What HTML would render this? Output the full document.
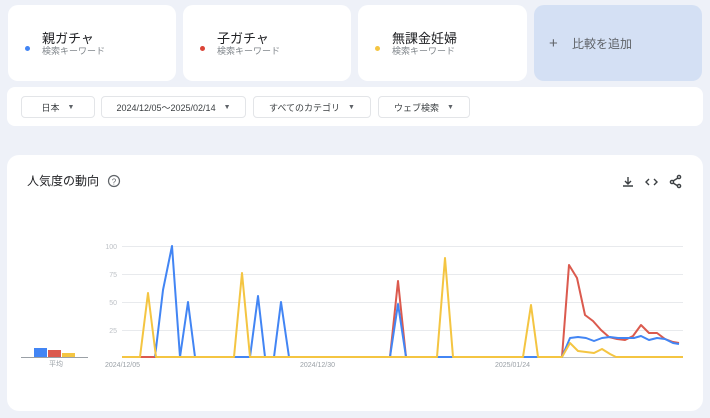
<!DOCTYPE html>
<html><head><meta charset="utf-8"><style>
*{margin:0;padding:0;box-sizing:border-box}
body{width:710px;height:418px;background:#eef1f8;font-family:"Liberation Sans","Noto Sans CJK JP",sans-serif;position:relative;overflow:hidden}
.card{position:absolute;top:5px;height:76px;background:#fff;border-radius:10px}
.dot{position:absolute;left:17px;top:41px;width:5px;height:5px;border-radius:50%}
.t{position:absolute;left:34px;top:27px;font-size:13px;line-height:14px;color:#202124}
.s{position:absolute;left:34px;top:41px;font-size:9px;line-height:10px;color:#80868b}
.bar{position:absolute;left:7px;top:87px;width:696px;height:39px;background:#fff;border-radius:8px}
.btn{position:absolute;top:96px;height:22px;border:1px solid #e3e5e8;border-radius:4px;font-size:9px;color:#3c4043;display:flex;align-items:center;justify-content:center}
.btn i{font-style:normal;font-size:7px;margin-left:8px;color:#5f6368}
.chart{position:absolute;left:7px;top:155px;width:696px;height:256px;background:#fff;border-radius:12px}
</style></head><body>
<div class="card" style="left:8px;width:168px"><div class="dot" style="background:#4285f4"></div><div class="t">親ガチャ</div><div class="s">検索キーワード</div></div>
<div class="card" style="left:183px;width:168px"><div class="dot" style="background:#db4437"></div><div class="t">子ガチャ</div><div class="s">検索キーワード</div></div>
<div class="card" style="left:358px;width:169px"><div class="dot" style="background:#f4c542"></div><div class="t">無課金妊婦</div><div class="s">検索キーワード</div></div>
<div class="card" style="left:534px;width:168px;background:#d4e0f4"><div style="position:absolute;left:15px;top:31px;font-size:15px;line-height:16px;color:#5f6368">+</div><div style="position:absolute;left:38px;top:33px;font-size:12px;line-height:13px;color:#5f6368">比較を追加</div></div>
<div class="bar"></div>
<div class="btn" style="left:21px;width:74px">日本<i>▼</i></div>
<div class="btn" style="left:101px;width:145px">2024/12/05〜2025/02/14<i>▼</i></div>
<div class="btn" style="left:253px;width:118px">すべてのカテゴリ<i>▼</i></div>
<div class="btn" style="left:378px;width:92px">ウェブ検索<i>▼</i></div>
<div class="chart"></div>
<div style="position:absolute;left:27px;top:174px;font-size:12px;line-height:14px;color:#202124">人気度の動向</div>
<svg width="710" height="418" style="position:absolute;left:0;top:0">
<circle cx="114" cy="181" r="5.5" fill="none" stroke="#5f6368" stroke-width="1.2"/>
<text x="114" y="184.5" font-size="8" text-anchor="middle" fill="#5f6368" font-family="Liberation Sans">?</text>
<g stroke="#3c4043" stroke-width="1.4" fill="none">
<path d="M628 177v7M625 181l3 3 3-3M623 186h10"/>
<path d="M649 179l-3 3 3 3M654 179l3 3-3 3"/>
<circle cx="679" cy="177" r="1.6"/><circle cx="672" cy="182" r="1.6"/><circle cx="679" cy="186" r="1.6"/><path d="M673 181l5-3M673 183l5 3"/>
</g>
<g stroke="#e8eaed" stroke-width="1"><path d="M122 246.5H683M122 274.5H683M122 302.5H683M122 330.5H683"/></g>
<path d="M122 357.5H683" stroke="#bdc1c6"/>
<g font-size="7" fill="#bdc1c6" font-family="Liberation Sans" text-anchor="end"><text x="117" y="249">100</text><text x="117" y="277">75</text><text x="117" y="305">50</text><text x="117" y="333">25</text></g>
<g font-size="7" fill="#9aa0a6" font-family="Liberation Sans"><text x="105" y="367">2024/12/05</text><text x="300" y="367">2024/12/30</text><text x="495" y="367">2025/01/24</text><text x="49" y="366">平均</text></g>
<path d="M21 357.5H88" stroke="#9aa0a6"/>
<rect x="34" y="348" width="13" height="9" fill="#4285f4"/><rect x="48" y="350" width="13" height="7" fill="#db5a4e"/><rect x="62" y="353" width="13" height="4" fill="#f4c542"/>
<g fill="none" stroke-width="2" stroke-linejoin="round">
<path stroke="#db5a4e" d="M140 357H390L398 281L406 357H562L569 265L577 278L585 315L593 321L601 330L609 337L617 339L625 340L633 336L641 325L649 333L657 333L665 339L673 342L679 343"/>
<path stroke="#4285f4" d="M155 357L163 290L172 246L180 357L188 302L195 357H250L258 296L265 357H274L281 302L289 357H390L398 304L406 357H562L570 338L578 337L586 338L594 341L602 338L610 337L618 338L626 338L634 338L641 336L649 340L657 338L665 339L673 343L679 344"/>
<path stroke="#f4c542" d="M122 357H140L148 293L156 357H234L242 273L250 357H437L445 258L453 357H523L531 305L538 357H562L570 343L578 351L586 352L594 353L602 349L610 354L616 357H683"/>
</g>
</svg>
</body></html>
